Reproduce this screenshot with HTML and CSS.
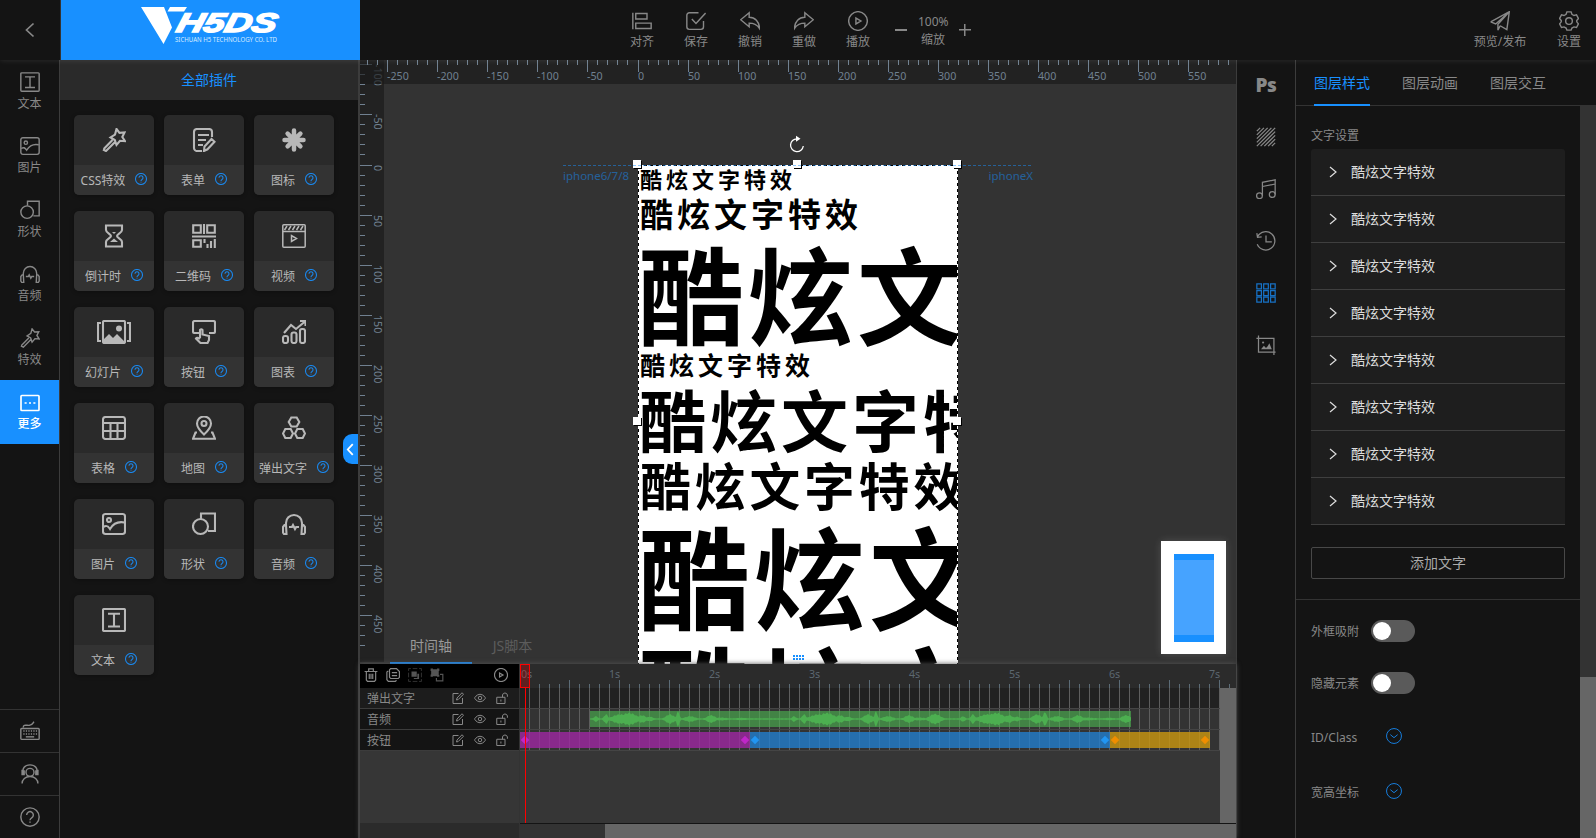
FILE: index.html
```html
<!DOCTYPE html>
<html lang="zh">
<head>
<meta charset="utf-8">
<title>H5DS</title>
<link rel="stylesheet" href="styles.css">
</head>
<body>
<svg class="defs" aria-hidden="true">
  <symbol id="i-text" viewBox="0 0 24 24"><rect x="1" y="1" width="22" height="22" rx="1"/><path d="M6 5.800h12M12 5.800v12.700M6 18.500h12"/></symbol>
  <symbol id="i-image" viewBox="0 0 24 24"><rect x="1" y="2" width="22" height="20" rx="2.5"/><circle cx="7" cy="8" r="2"/><path d="M1.500 15c3-2 4.500-1 6.500 2 3-5 7-8 14.500-6.500"/></symbol>
  <symbol id="i-shape" viewBox="0 0 24 24"><circle cx="8.500" cy="14.500" r="7.500"/><path d="M9 7V1.500h14V19h-7"/></symbol>
  <symbol id="i-audio" viewBox="0 0 24 24"><path d="M4 13v-2a8 8 0 0 1 16 0v2M4 13H2.500L1 15v5.500l1 1.500h2.500zM20 13h1.500l1.500 2v5.500l-1 1.500h-2.500zM7 15h3l1-2 2 4 1.200-2H17"/></symbol>
  <symbol id="i-magic" viewBox="0 0 24 24"><path d="M14.500 1l3 3.800 5-.3-2.200 4.500 2.700 4.200-5-.4L14.500 17l-1.700-5-4.300-2.500L13 6.500zM10.500 12l-8.800 9M12.800 14.200L4 23l-3-1.500"/></symbol>
  <symbol id="i-more" viewBox="0 0 24 24"><rect x="1.200" y="3" width="21.600" height="18" rx="1"/><path d="M5.500 12h2.500M10.800 12h2.400M16 12h2.500"/></symbol>
  <symbol id="i-form" viewBox="0 0 24 24"><path d="M10 23H5a3 3 0 0 1-3-3V4a3 3 0 0 1 3-3h12a3 3 0 0 1 3 3v5M6 7h11M6 12h8M6 17h5M12 23l.5-4.500 7-7.500 3 2.800-7 7.500z"/></symbol>
  <symbol id="i-flower" viewBox="0 0 24 24"><path class="fat" d="M12 2.500v19M2.500 12h19M5.600 5.600l12.800 12.800M18.400 5.600L5.600 18.400"/></symbol>
  <symbol id="i-glass" viewBox="0 0 24 24"><path d="M4 1.500h16v4.500c0 3-5 4-5 6s5 3 5 6v4.500H4V18c0-3 5-4 5-6s-5-3-5-6z"/><path class="solid" d="M8 18l4-3.500 4 3.500zM10 8h4l-2 2z"/></symbol>
  <symbol id="i-qr" viewBox="0 0 24 24"><path d="M1.200 1.200h7.600v7.600H1.200zM12 0v10M15.200 1.200h7.600v7.600h-7.600zM0 12.500h24M1.200 16.200h7.600v6.600H1.200zM12.500 15v4M15.500 20v4M19 17v7M22.800 15v9"/></symbol>
  <symbol id="i-video" viewBox="0 0 24 24"><rect x=".8" y=".8" width="22.400" height="22.400" rx="1"/><path d="M1 7.500h22M5 2L2.500 6M9 2L6.500 6M13 2l-2.500 4M17 2l-2.500 4M21 2l-2.500 4M9.500 11.500v6l5-3z"/></symbol>
  <symbol id="i-slides" viewBox="0 0 34 24"><rect x="6" y="1" width="22" height="22" rx="1"/><path d="M4 3H1v18h3M30 3h3v18h-3"/><path class="solid" d="M7 22v-3l5-5 4 4 4-4 7 7v1z"/><circle class="solid" cx="22" cy="8.500" r="3"/></symbol>
  <symbol id="i-button" viewBox="0 0 24 24"><path d="M7 13H2.500A1.500 1.500 0 0 1 1 11.500v-9A1.500 1.500 0 0 1 2.500 1h19A1.500 1.500 0 0 1 23 2.500v9a1.500 1.500 0 0 1-1.500 1.500H17M8 18v-8q1.300-1.500 2.500 0v4.500l6.500 1.500v4l-1.500 3H8.500L4 18.500q1-1.800 4 .5"/></symbol>
  <symbol id="i-chart" viewBox="0 0 24 24"><rect x="1" y="16" width="5" height="7" rx="2"/><rect x="9.500" y="12.500" width="5" height="10.500" rx="2"/><rect x="18" y="9" width="5" height="14" rx="2"/><path d="M2 13l7-8 5 4 9-7.500M18 1h5.500v5"/></symbol>
  <symbol id="i-table" viewBox="0 0 24 24"><rect x="1" y="1" width="22" height="22" rx="2.500"/><path d="M1 7h22M1 15h22M8.500 7v16M15.500 7v16"/></symbol>
  <symbol id="i-map" viewBox="0 0 24 24"><path d="M12 18.500S5 12 5 7.500a7 7 0 0 1 14 0c0 4.500-7 11-7 11zM5 16.500H3.500L1 22.800h22L20.500 16.500H19"/><circle cx="12" cy="7.500" r="2.500"/></symbol>
  <symbol id="i-hex" viewBox="0 0 24 24"><path d="M9.300 1.500h5.400L17.300 6l-2.600 4.500H9.300L6.700 6zM3.300 13h5.400l2.300 4.500L8.700 22H3.300L1 17.500zM15.300 13h5.400l2.300 4.500-2.300 4.500h-5.400L13 17.500z"/></symbol>
  <symbol id="i-help" viewBox="0 0 24 24"><circle cx="12" cy="12" r="11"/><path d="M8 9.500a4 4 0 1 1 6 3.500c-1.500.9-2 1.500-2 3M12 17.500V19"/></symbol>
  <symbol id="i-keyboard" viewBox="0 0 24 24"><rect x="1" y="9" width="22" height="13" rx="1"/><path d="M4 8c-.5-5 5-2 8-3 4-.5 3-3 5-4"/><path class="dots" d="M4 12h17M4 15.500h17"/><path d="M7 19h10"/></symbol>
  <symbol id="i-service" viewBox="0 0 24 24"><circle cx="12" cy="10" r="4.800"/><path d="M2.500 23.500c0-5 4-8.500 9.500-8.500s9.500 3.500 9.500 8.500M4 12.500C2 5 6 1 12 1s10 4 8 11.500M2.500 7v5.500H5V7.500M21.500 7v5.500H19V7.500"/></symbol>
  <symbol id="i-align" viewBox="0 0 24 24"><path d="M1 2v20M4.500 3H18v6.500H4.500zM4.500 14.500H23V21H4.500z"/></symbol>
  <symbol id="i-save" viewBox="0 0 24 24"><path d="M15 2H4a3 3 0 0 0-3 3v14a3 3 0 0 0 3 3h14a3 3 0 0 0 3-3v-7M7 9.500l5 5.500L23.500 2.500"/></symbol>
  <symbol id="i-undo" viewBox="0 0 24 24"><path d="M11 2v5.500c7 0 12 5 12.500 13.500-3-4.500-6.500-6.500-12.500-6.500V19L.8 10.500z"/></symbol>
  <symbol id="i-play" viewBox="0 0 24 24"><circle cx="12" cy="12" r="11.200"/><path d="M9.500 8.500v7l6-3.500z"/></symbol>
  <symbol id="i-send" viewBox="0 0 24 24"><path d="M.8 13L23.200.8l-3 21.400-8-4.500M.8 13l6 2.500L23.200.8M9.500 23l2.700-5.300M9.500 23v-7L23.200.8"/></symbol>
  <symbol id="i-gear" viewBox="0 0 24 24"><circle cx="12" cy="12" r="4"/><path d="M9.500 1h5l1 3 2.500 1.400 3-.7 2.300 4.300-2 2.500v1.500l2 2.500-2.300 4.300-3-.7-2.500 1.400-1 2.500h-5l-1-2.500L6 19.100l-3 .7L.7 15.500l2-2.500v-1.500L.7 9 3 4.700l3 .7L8.500 4z"/></symbol>
  <symbol id="i-hatch" viewBox="0 0 24 24"><path d="M1 5l4-4M1 9.500L9.500 1M1 14L14 1M1 18.500L18.500 1M1 23L23 1M5.500 23L23 5.500M10 23l13-13M14.500 23l8.500-8.500M19 23l4-4"/></symbol>
  <symbol id="i-music" viewBox="0 0 24 24"><circle cx="4.200" cy="20" r="3.500"/><circle cx="19.500" cy="18.500" r="3.500"/><path d="M7.700 20V4L23 1v17.500M7.700 9L23 6"/></symbol>
  <symbol id="i-clock" viewBox="0 0 24 24"><path d="M2 6.500A11 11 0 1 1 1.500 16M1 2.500L1.800 7.500l5-.5M12 5.500V13h7"/></symbol>
  <symbol id="i-grid" viewBox="0 0 24 24"><path d="M1 1h5.500v6H1zM9.200 1h5.600v6H9.200zM17.500 1H23v6h-5.500zM1 9h5.500v6H1zM9.200 9h5.600v6H9.200zM17.500 9H23v6h-5.500zM1 17h5.500v6H1zM9.200 17h5.600v6H9.200zM17.500 17H23v6h-5.500z"/></symbol>
  <symbol id="i-crop" viewBox="0 0 24 24"><path d="M3 .5V20.500h20.500M.5 4H21.500v20"/><path class="solid" d="M6 17l3.500-4 2.500 2.500 2-2 2-3.500L19 17z"/><circle class="solid" cx="8.500" cy="9" r="1.300"/></symbol>
  <symbol id="i-trash" viewBox="0 0 24 24"><path d="M1 6h22M8 5.500V1.500h8v4M4 6v14.500L6 23h12l2-2.500V6M9 10v9M12 10v9M15 10v9"/></symbol>
  <symbol id="i-copy" viewBox="0 0 24 24"><path d="M8 1h10l5 5v10l-2 2H8l-2-2V3zM4 5L1.500 7v13l2.500 3h12l2-2M10 8h9M10 13h9"/></symbol>
  <symbol id="i-group" viewBox="0 0 24 24"><path d="M1 5V1h4M19 1h4v4M23 19v4h-4M5 23H1v-4M8 1h8M8 23h8M1 8v8M23 8v8"/><path class="solid" d="M6 6h9v9H6zM16 10h3v9h-9v-2h6z"/></symbol>
  <symbol id="i-ungroup" viewBox="0 0 24 24"><path d="M11 17v5h11V11h-5"/><path class="solid" d="M1 1h4v1h7V1h4v4h-1v7h1v3h-4v-1H5v1H1v-4h1V5H1z"/></symbol>
  <symbol id="i-edit" viewBox="0 0 24 24"><path d="M13 3H2v20h19V12M9 16l1-4L20 1.500l3 3L12.500 15z"/></symbol>
  <symbol id="i-eye" viewBox="0 0 24 24"><path d="M1 12s4-7.500 11-7.500S23 12 23 12s-4 7.500-11 7.500S1 12 1 12z"/><circle cx="12" cy="12" r="3.500"/></symbol>
  <symbol id="i-lock" viewBox="0 0 24 24"><path d="M1.500 10.500H18V23H1.500zM13 10.500V6a5 5 0 0 1 9.800 0v3.500M9.800 15v4"/></symbol>
  <symbol id="i-down" viewBox="0 0 24 24"><circle cx="12" cy="12" r="11.200"/><path d="M6.500 10l5.500 4.500 5.500-4.500"/></symbol>
</svg>

<header class="top">
  <button class="back"><svg class="ic" viewBox="0 0 10 16"><path d="M8.500 1.500L1.500 8l7 6.500"/></svg></button>
  <div class="brand">
    <svg viewBox="0 0 140 38">
      <path class="mark" d="M0 0h23l8 20.500L22.500 37zM29 0h17l-3 4.500H26.500z"/>
      <text class="mark-name" x="34" y="24.500" textLength="100" lengthAdjust="spacingAndGlyphs">H5DS</text>
      <text class="mark-sub" x="34" y="34.500" textLength="102" lengthAdjust="spacingAndGlyphs">SICHUAN H5 TECHNOLOGY CO. LTD</text>
    </svg>
  </div>
  <nav class="tools">
    <a><svg class="ic"><use href="#i-align"/></svg>对齐</a>
    <a><svg class="ic"><use href="#i-save"/></svg>保存</a>
    <a><svg class="ic"><use href="#i-undo"/></svg>撤销</a>
    <a><svg class="ic flip"><use href="#i-undo"/></svg>重做</a>
    <a><svg class="ic"><use href="#i-play"/></svg>播放</a>
    <div class="zoom"><i class="minus"></i><span>100%<br>缩放</span><i class="plus"></i></div>
  </nav>
  <nav class="publish">
    <a><svg class="ic"><use href="#i-send"/></svg>预览/发布</a>
    <a><svg class="ic"><use href="#i-gear"/></svg>设置</a>
  </nav>
</header>

<main class="work">
  <aside class="rail">
    <a><svg class="ic"><use href="#i-text"/></svg>文本</a>
    <a><svg class="ic"><use href="#i-image"/></svg>图片</a>
    <a><svg class="ic"><use href="#i-shape"/></svg>形状</a>
    <a><svg class="ic"><use href="#i-audio"/></svg>音频</a>
    <a><svg class="ic"><use href="#i-magic"/></svg>特效</a>
    <a class="on"><svg class="ic"><use href="#i-more"/></svg>更多</a>
    <div class="rail-foot">
      <b><svg class="ic"><use href="#i-keyboard"/></svg></b>
      <b><svg class="ic"><use href="#i-service"/></svg></b>
      <b><svg class="ic"><use href="#i-help"/></svg></b>
    </div>
  </aside>

  <section class="plugins">
    <h2>全部插件</h2>
    <div class="cards">
      <div class="card"><svg class="ic"><use href="#i-magic"/></svg><p>CSS特效<svg class="q"><use href="#i-help"/></svg></p></div>
      <div class="card"><svg class="ic"><use href="#i-form"/></svg><p>表单<svg class="q"><use href="#i-help"/></svg></p></div>
      <div class="card"><svg class="ic"><use href="#i-flower"/></svg><p>图标<svg class="q"><use href="#i-help"/></svg></p></div>
      <div class="card"><svg class="ic"><use href="#i-glass"/></svg><p>倒计时<svg class="q"><use href="#i-help"/></svg></p></div>
      <div class="card"><svg class="ic"><use href="#i-qr"/></svg><p>二维码<svg class="q"><use href="#i-help"/></svg></p></div>
      <div class="card"><svg class="ic thin"><use href="#i-video"/></svg><p>视频<svg class="q"><use href="#i-help"/></svg></p></div>
      <div class="card"><svg class="ic wide"><use href="#i-slides"/></svg><p>幻灯片<svg class="q"><use href="#i-help"/></svg></p></div>
      <div class="card"><svg class="ic"><use href="#i-button"/></svg><p>按钮<svg class="q"><use href="#i-help"/></svg></p></div>
      <div class="card"><svg class="ic"><use href="#i-chart"/></svg><p>图表<svg class="q"><use href="#i-help"/></svg></p></div>
      <div class="card"><svg class="ic"><use href="#i-table"/></svg><p>表格<svg class="q"><use href="#i-help"/></svg></p></div>
      <div class="card"><svg class="ic"><use href="#i-map"/></svg><p>地图<svg class="q"><use href="#i-help"/></svg></p></div>
      <div class="card"><svg class="ic"><use href="#i-hex"/></svg><p>弹出文字<svg class="q"><use href="#i-help"/></svg></p></div>
      <div class="card"><svg class="ic"><use href="#i-image"/></svg><p>图片<svg class="q"><use href="#i-help"/></svg></p></div>
      <div class="card"><svg class="ic"><use href="#i-shape"/></svg><p>形状<svg class="q"><use href="#i-help"/></svg></p></div>
      <div class="card"><svg class="ic"><use href="#i-audio"/></svg><p>音频<svg class="q"><use href="#i-help"/></svg></p></div>
      <div class="card"><svg class="ic"><use href="#i-text"/></svg><p>文本<svg class="q"><use href="#i-help"/></svg></p></div>
    </div>
    <button class="fold"><svg class="ic" viewBox="0 0 10 16"><path d="M7.500 2L2 8l5.500 6"/></svg></button>
  </section>

  <section class="center">
    <div class="stage">
      <div class="ruler-y" id="ry"></div>
      <div class="ruler-x" id="rx"></div>
      <span class="device left">iphone6/7/8</span>
      <span class="device right">iphoneX</span>
      <svg class="rotate" viewBox="0 0 16 18"><path d="M8 3.800a6.400 6.400 0 1 0 6.300 7.200"/><path class="solid" d="M7 .8l4.500 3L7 6.800z"/></svg>
      <div class="page">
        <p class="t1">酷炫文字特效</p>
        <p class="t2">酷炫文字特效</p>
        <p class="t3">酷炫文字特效</p>
        <p class="t4">酷炫文字特效</p>
        <p class="t5">酷炫文字特效</p>
        <p class="t6">酷炫文字特效</p>
        <p class="t7">酷炫文字特效</p>
        <p class="t8">酷炫文字特效</p>
      </div>
      <i class="handle h-nw"></i><i class="handle h-n"></i><i class="handle h-ne"></i><i class="handle h-w"></i><i class="handle h-e"></i>
      <div class="guide"></div>
      <div class="grip"></div>
      <div class="thumb"><div></div></div>
      <div class="dock-tabs"><span class="on">时间轴</span><span>JS脚本</span></div>
    </div>

    <div class="timeline">
      <div class="layers">
        <div class="layer-tools">
          <svg class="ic"><use href="#i-trash"/></svg><svg class="ic"><use href="#i-copy"/></svg><svg class="ic dim"><use href="#i-group"/></svg><svg class="ic dim2"><use href="#i-ungroup"/></svg><svg class="ic end"><use href="#i-play"/></svg>
        </div>
        <div class="layer lit"><span>弹出文字</span><svg class="ic"><use href="#i-edit"/></svg><svg class="ic"><use href="#i-eye"/></svg><svg class="ic"><use href="#i-lock"/></svg></div>
        <div class="layer"><span>音频</span><svg class="ic"><use href="#i-edit"/></svg><svg class="ic"><use href="#i-eye"/></svg><svg class="ic"><use href="#i-lock"/></svg></div>
        <div class="layer"><span>按钮</span><svg class="ic"><use href="#i-edit"/></svg><svg class="ic"><use href="#i-eye"/></svg><svg class="ic"><use href="#i-lock"/></svg></div>
        <div class="layers-foot"></div>
      </div>
      <div class="tracks">
        <div class="seconds" id="sec"></div>
        <div class="track-body">
          <div class="track-rows">
            <div class="track lit"></div>
            <div class="track"><div class="clip green"><svg id="wave" viewBox="0 0 541 16"></svg></div></div>
            <div class="track"><div class="clip purple"><i></i><i></i></div><div class="clip blue"><i></i><i></i></div><div class="clip gold"><i></i><i></i></div></div>
          </div>
          <div class="vbar"></div>
        </div>
        <div class="hbar"><div></div></div>
        <div class="playhead"></div>
      </div>
    </div>
  </section>

  <aside class="side-tools">
    <b class="ps">Ps</b>
    <svg class="ic"><use href="#i-hatch"/></svg>
    <svg class="ic"><use href="#i-music"/></svg>
    <svg class="ic"><use href="#i-clock"/></svg>
    <svg class="ic act"><use href="#i-grid"/></svg>
    <svg class="ic"><use href="#i-crop"/></svg>
  </aside>

  <aside class="props">
    <nav class="prop-tabs"><a class="on">图层样式</a><a>图层动画</a><a>图层交互</a></nav>
    <div class="prop-main">
      <div class="prop-body">
        <div class="group">
          <h3>文字设置</h3>
          <ul>
            <li><svg class="ic" viewBox="0 0 8 12"><path d="M1 1l6 5-6 5"/></svg>酷炫文字特效</li>
            <li><svg class="ic" viewBox="0 0 8 12"><path d="M1 1l6 5-6 5"/></svg>酷炫文字特效</li>
            <li><svg class="ic" viewBox="0 0 8 12"><path d="M1 1l6 5-6 5"/></svg>酷炫文字特效</li>
            <li><svg class="ic" viewBox="0 0 8 12"><path d="M1 1l6 5-6 5"/></svg>酷炫文字特效</li>
            <li><svg class="ic" viewBox="0 0 8 12"><path d="M1 1l6 5-6 5"/></svg>酷炫文字特效</li>
            <li><svg class="ic" viewBox="0 0 8 12"><path d="M1 1l6 5-6 5"/></svg>酷炫文字特效</li>
            <li><svg class="ic" viewBox="0 0 8 12"><path d="M1 1l6 5-6 5"/></svg>酷炫文字特效</li>
            <li><svg class="ic" viewBox="0 0 8 12"><path d="M1 1l6 5-6 5"/></svg>酷炫文字特效</li>
          </ul>
          <button class="add">添加文字</button>
        </div>
        <div class="fields">
          <div class="field"><label>外框吸附</label><i class="switch"></i></div>
          <div class="field"><label>隐藏元素</label><i class="switch"></i></div>
          <div class="field tall"><label>ID/Class</label><svg class="ic"><use href="#i-down"/></svg></div>
          <div class="field tall"><label>宽高坐标</label><svg class="ic"><use href="#i-down"/></svg></div>
        </div>
      </div>
      <div class="scroll"><div></div></div>
    </div>
  </aside>
</main>
<script src="main.js"></script>
</body>
</html>
```

FILE: styles.css
```css
* { box-sizing: border-box; }
body { margin: 0; width: 1596px; height: 838px; overflow: hidden; background: #141414; color: #888; font: 12px/16px "Noto Sans", "Noto Sans CJK SC", sans-serif; display: flex; flex-direction: column; }
h2, h3, p, ul { margin: 0; padding: 0; font-weight: 400; list-style: none; }
i { font-style: normal; }
button { background: none; border: 0; padding: 0; font: inherit; color: inherit; }
.defs { position: absolute; width: 0; height: 0; }
.ic, .q { width: 20px; height: 20px; fill: none; stroke: currentColor; stroke-width: 1.7; flex: none; display: block; }
.solid { fill: currentColor; stroke: none; }
.fat { stroke-width: 4.5; stroke-linecap: round; }
.dots { stroke-dasharray: 1.5 1.5; }
.flip { transform: scaleX(-1); }

.top { height: 60px; display: flex; position: relative; z-index: 5; background: #141414; box-shadow: 0 0 6px rgba(255,255,255,.12); }
.back { width: 61px; border-right: 1px solid #333; display: flex; align-items: center; justify-content: center; }
.back .ic { width: 10px; height: 16px; }
.brand { width: 299px; background: #1890ff; padding: 7px 0 0 80px; }
.brand svg { width: 140px; height: 38px; display: block; overflow: visible; }
.mark { fill: #fff; }
.mark-name { font: italic 900 27px "Liberation Sans", sans-serif; fill: #fff; stroke: #fff; stroke-width: 1.5; transform-origin: 34px 24.5px; transform: skewX(-14deg); }
.mark-sub { font: 6.500px "Noto Sans", sans-serif; fill: #d6ebff; }
.tools { margin-left: 255px; display: flex; }
.tools a, .publish a { width: 54px; display: flex; flex-direction: column; align-items: center; padding-top: 11px; gap: 3px; white-space: nowrap; }
.zoom { display: flex; align-items: center; gap: 11px; margin-left: 10px; text-align: center; line-height: 18px; }
.zoom span { width: 30px; padding-top: 1px; }
.minus { width: 12px; height: 2px; background: #888; }
.plus { width: 12px; height: 12px; background: linear-gradient(#888, #888) 50% 50%/12px 1.500px no-repeat, linear-gradient(#888, #888) 50% 50%/1.500px 12px no-repeat; }
.publish { margin-left: auto; display: flex; gap: 15px; }

.work { flex: 1; display: flex; min-height: 0; }
.rail { width: 60px; border-right: 1px solid #3c3c3c; display: flex; flex-direction: column; }
.rail a { height: 64px; display: flex; flex-direction: column; align-items: center; padding-top: 12px; gap: 4px; }
.rail .on { background: #1890ff; color: #fff; font-weight: 500; }
.rail .on .ic { stroke-width: 2; margin: 1px 0 -1px; }
.rail-foot { margin-top: auto; }
.rail-foot b { height: 43px; border-top: 1px solid #333; display: flex; align-items: center; justify-content: center; }

.plugins { width: 300px; border-right: 2px solid #3c3c3c; position: relative; }
.plugins h2 { height: 40px; background: #2a2a2a; color: #1890ff; font-size: 14px; line-height: 40px; text-align: center; }
.cards { display: grid; grid-template-columns: repeat(3, 80px); gap: 16px 10px; padding: 15px 14px; }
.card { height: 80px; border-radius: 5px; background: #2a2a2a; overflow: hidden; box-shadow: 0 1px 4px rgba(0,0,0,.3); color: #b8b8b8; display: flex; flex-direction: column; align-items: center; justify-content: space-between; }
.card .ic { width: 24px; height: 24px; margin-top: 13px; stroke-width: 2.1; }
.card .thin { stroke-width: 1.500; }
.card .wide { width: 34px; }
.card p { width: 80px; height: 30px; background: #333; display: flex; align-items: center; justify-content: center; gap: 10px; white-space: nowrap; padding-top: 1px; }
.card .q { width: 12px; height: 12px; margin-top: -3px; color: #1890ff; stroke-width: 2.200; opacity: .9; }
.fold { position: absolute; right: 0; top: 374px; width: 15px; height: 30px; border-radius: 9px 0 0 9px; background: #1890ff; color: #fff; display: flex; align-items: center; justify-content: center; }
.fold .ic { width: 9px; height: 15px; stroke-width: 2; }

.center { width: 876px; display: flex; flex-direction: column; }
.stage { height: 604px; background: #333; position: relative; overflow: hidden; }
.ruler-x { position: absolute; left: 0; top: 0; width: 876px; height: 24px; background: rgba(26,26,26,.65); overflow: hidden; }
.ruler-y { position: absolute; left: 0; top: 0; width: 24px; height: 602px; background: #222; overflow: hidden; }
.ruler-x i, .ruler-y i, .seconds i { position: absolute; background: #708090; }
.ruler-x i { top: 0; width: 1px; height: 5px; }
.ruler-x .big { height: 12px; }
.ruler-y i { left: 0; height: 1px; width: 5px; }
.ruler-y .big { width: 12px; }
.ruler-x span, .ruler-y span, .seconds span { position: absolute; color: #708090; font-size: 10.700px; line-height: 12px; }
.ruler-x span { top: 10px; }
.ruler-y span { left: 12px; writing-mode: vertical-rl; }
.device { position: absolute; top: 108px; color: #1890ff; opacity: .5; font-size: 11.500px; }
.device.left { left: 203px; }
.device.right { right: 203px; }
.rotate { position: absolute; left: 429px; top: 75px; width: 16px; height: 18px; fill: none; stroke: #fff; stroke-width: 1.300; color: #fff; }
.page { position: absolute; left: 278px; top: 105px; width: 320px; height: 510px; background: #fff; color: #000; overflow: hidden; padding-left: 2px; font-family: "Noto Sans CJK SC", sans-serif; font-weight: 700; letter-spacing: 4px; white-space: nowrap; }
.page p { font-weight: 700; }
.page::after { content: ""; position: absolute; inset: 0; background: repeating-linear-gradient(90deg, #000 0 3px, #fff 3px 6px) 0 0/100% 1px no-repeat, repeating-linear-gradient(#000 0 3px, #fff 3px 6px) 0 0/1px 100% no-repeat, repeating-linear-gradient(#000 0 3px, #fff 3px 6px) 100% 0/1px 100% no-repeat; }
.t1 { font-size: 22px; line-height: 26px; }
.t2 { font-size: 33px; line-height: 45px; }
.page .t3 { font-size: 105.500px; line-height: 111px; margin-left: -2px; }
.t4 { font-size: 25px; line-height: 34px; }
.page .t5 { font-size: 67px; line-height: 73px; margin-left: -1px; }
.t6 { font-size: 50.700px; line-height: 61px; }
.page .t7 { font-size: 111.500px; line-height: 118px; margin-left: -2px; }
.page .t8 { font-size: 111.500px; line-height: 121px; margin-left: -2px; }
.handle { position: absolute; width: 8px; height: 8px; background: #fff; box-shadow: 1px 1px 0 #000; }
.h-nw { left: 273px; top: 100px; }
.h-n { left: 433px; top: 100px; }
.h-ne { left: 593px; top: 100px; }
.h-w { left: 273px; top: 357px; }
.h-e { left: 593px; top: 357px; }
.guide { position: absolute; left: 203px; top: 105px; width: 470px; height: 1px; background: repeating-linear-gradient(90deg, #1890ff 0 3px, transparent 3px 5px); opacity: .5; }
.grip { position: absolute; left: 433px; top: 595px; width: 11px; height: 5px; background: repeating-linear-gradient(90deg, #1890ff 0 2px, transparent 2px 3px) 0 0/100% 2px no-repeat, repeating-linear-gradient(90deg, #1890ff 0 2px, transparent 2px 3px) 0 3px/100% 2px no-repeat; }
.thumb { position: absolute; left: 801px; top: 481px; width: 65px; height: 113px; background: #fff; padding: 13px 12px 12px 13px; box-shadow: 0 0 8px rgba(255,255,255,.15); }
.thumb div { height: 88px; background: #46a3ff; border: solid #1890ff; border-width: 6px 0 7px; }
.dock-tabs { position: absolute; left: 30px; bottom: 0; display: flex; font-size: 14px; line-height: 36px; color: #5c5c5c; }
.dock-tabs span { width: 82px; height: 36px; text-align: center; }
.dock-tabs span + span { width: 81px; }
.dock-tabs .on { color: #999; border-bottom: 2px solid #1890ff; }

.timeline { flex: 1; display: flex; background: #363636; min-height: 0; position: relative; box-shadow: 0 0 5px #555; z-index: 2; }
.layers { width: 160px; display: flex; flex-direction: column; border-right: 1px solid #333; }
.layer-tools { height: 24px; background: #000; display: flex; align-items: center; padding: 0 11px 2px 4px; gap: 8px; }
.layer-tools .ic { width: 14px; height: 14px; stroke-width: 2; }
.layer-tools .dim { color: #555; stroke-width: 1; }
.layer-tools .dim2 { color: #555; }
.layer-tools .end { margin-left: auto; }
.layer { height: 21px; background: #141414; border-bottom: 1px solid #3c3c3c; display: flex; align-items: center; padding: 1px 11px 0 7px; gap: 10px; }
.layer.lit { background: #1c1c1c; }
.layer span { margin-right: auto; font-size: 12px; }
.layer .ic { width: 12px; height: 12px; stroke-width: 2; margin-top: -1px; }
.layers-foot { margin-top: auto; height: 15px; background: #2b2b2b; }
.tracks { width: 716px; display: flex; flex-direction: column; position: relative; }
.seconds { height: 24px; background: #2b2b2b; position: relative; }
.seconds i { width: 1px; bottom: 0; height: 4px; background: #5c6c77; }
.seconds .big { height: 8px; }
.seconds span { top: 4px; color: #5c6770; }
.track-body { flex: 1; display: flex; justify-content: space-between; }
.track-rows { width: 700px; height: 63px; background: repeating-linear-gradient(90deg, transparent 0 9px, #5e5e5e 9px 10px), linear-gradient(#212121 0 20px, #333 20px); }
.track { height: 21px; border-bottom: 1px solid #444; display: flex; padding-top: 2px; }
.track .green { margin-left: 70px; width: 541px; background: rgba(76,175,80,.65); }
.clip { height: 16px; display: flex; align-items: center; justify-content: space-between; }
.clip i { width: 6px; height: 6px; transform: rotate(45deg); margin: 0 2px; }
.clip svg { width: 541px; height: 16px; fill: #4caf50; }
.purple { width: 230px; background: rgba(156,39,160,.82); }
.purple i { background: #c026c9; }
.blue { width: 360px; background: rgba(33,128,210,.78); }
.blue i { background: #2196f3; }
.gold { width: 100px; background: rgba(200,150,16,.82); }
.gold i { background: #ef8e00; }
.vbar { width: 16px; background: #666; }
.hbar { height: 15px; background: #333; border-top: 1px solid #141414; padding-left: 85px; }
.hbar div { height: 14px; background: #666; }
.playhead { position: absolute; left: 0; top: 0; width: 10px; height: 24px; border: 1px solid #f00; background: rgba(255,0,0,.25); }
.playhead::after { content: ""; position: absolute; left: 4px; top: 23px; width: 1px; height: 135px; background: #f00; }

.side-tools { width: 60px; border: solid #3c3c3c; border-width: 0 1px; display: flex; flex-direction: column; align-items: center; padding-top: 15px; gap: 32px; }
.side-tools .ic { stroke-width: 1.5; }
.side-tools .act { color: #1890ff; opacity: .75; }
.ps { height: 20px; font: 800 19px/21px "Open Sans", sans-serif; letter-spacing: -.5px; }
.props { flex: 1; display: flex; flex-direction: column; }
.prop-tabs { height: 46px; border-bottom: 1px solid #333; display: flex; gap: 32px; padding-left: 18px; font-size: 14px; line-height: 46px; }
.prop-tabs a { height: 46px; }
.prop-tabs .on { color: #1890ff; border-bottom: 2px solid #1890ff; }
.prop-main { flex: 1; display: flex; }
.prop-body { width: 284px; }
.group { padding: 22px 15px 20px; border-bottom: 1px solid #333; height: 494px; }
.group h3 { font-size: 12px; line-height: 16px; margin-bottom: 5px; }
.group li { height: 47px; background: #1e1e1e; border-bottom: 1px solid #3f3f3f; display: flex; align-items: center; gap: 14px; padding-left: 18px; font-size: 14px; color: #ddd; }
.group li .ic { width: 8px; height: 12px; stroke-width: 1.200; }
.group li:first-child { border-radius: 3px 3px 0 0; }
.add { width: 254px; height: 32px; margin-top: 22px; border: 1px solid #484848; border-radius: 2px; font-size: 14px; color: #aaa; display: block; }
.fields { padding: 5px 15px; }
.field { height: 52px; display: flex; align-items: center; }
.field label { width: 60px; padding-top: 2px; }
.field.tall { height: 55px; }
.field.tall .ic { width: 16px; height: 16px; margin: -1px 0 0 15px; color: #1890ff; opacity: .85; stroke-width: 1.5; }
.switch { width: 44px; height: 22px; border-radius: 11px; background: #5a5a5a; padding: 2px; }
.switch::before { content: ""; display: block; width: 18px; height: 18px; border-radius: 50%; background: #fff; }
.scroll { width: 16px; background: #333; display: flex; align-items: flex-end; }
.scroll div { width: 16px; height: 161px; background: #666; }
```

FILE: main.js
```js
// Builds the canvas rulers. Ticks left of zero sit one pixel further out.
function ruler(el, prop, from, to, zero) {
  for (let v = from; v <= to; v += 10) {
    const pos = zero + v - (v < 0 ? 1 : 0);
    const tick = document.createElement('i');
    tick.style[prop] = pos + 'px';
    if (v % 50 === 0) {
      tick.className = 'big';
      const label = document.createElement('span');
      label.textContent = v;
      label.style[prop] = pos + 'px';
      el.append(label);
    }
    el.append(tick);
  }
}
ruler(document.getElementById('rx'), 'left', -270, 590, 278);
ruler(document.getElementById('ry'), 'top', -100, 480, 105);

// Timeline seconds: a tick every 10px, a second every 100px.
const sec = document.getElementById('sec');
for (let x = 19; x <= 709; x += 10) {
  const tick = document.createElement('i');
  tick.style.left = x + 'px';
  if ((x + 1) % 50 === 0) tick.className = 'big';
  sec.append(tick);
}
for (let s = 0; s < 8; s++) {
  const label = document.createElement('span');
  label.textContent = s + 's';
  label.style.left = (s ? s * 100 - 11 : 1) + 'px';
  sec.append(label);
}

// Audio waveform: three passes of a sample described by [centre, spread, height].
const bumps = [[6, 2, 3], [16, 2, 5], [30, 7, 5], [39, 7, 6.5], [52, 4, 4], [60, 3, 2.5], [80, 4, 5], [88, 1.5, 8], [100, 5, 3], [121, 4, 4], [131, 8, 1.5], [152, 6, 1.3]];
const starts = [0, 198, 367];
const peaks = [[345, 5, 5.5], [536, 4, 4]];
for (const s of starts) for (const [c, w, h] of bumps) peaks.push([s + c, w, h]);
let upper = '';
let lower = '';
for (let x = 0; x <= 541; x++) {
  let a = 0.8;
  for (const [c, w, h] of peaks) a = Math.max(a, h * Math.exp(-((x - c) ** 2) / (2 * w * w)));
  a *= 0.72 + 0.28 * Math.abs(Math.sin(x * 2.3));
  upper += `L${x} ${(8 - a).toFixed(1)}`;
  lower = `L${x} ${(8 + a).toFixed(1)}` + lower;
}
document.getElementById('wave').innerHTML = `<path d="M0 8${upper}${lower}Z"/>`;
```
